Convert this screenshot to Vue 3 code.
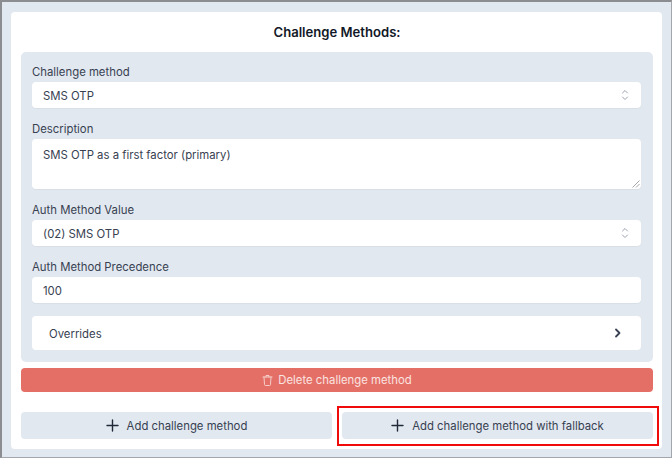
<script setup>
import { ref } from 'vue';

const method = ref('SMS OTP');
const description = ref('SMS OTP as a first factor (primary)');
const authValue = ref('(02) SMS OTP');
const precedence = ref('100');
</script>

<template>
  <div class="page">
    <div class="card">
      <h2 class="title">Challenge Methods:</h2>
      <div class="panel">
        <div class="field">
          <label>Challenge method</label>
          <div class="select">
            <span>{{ method }}</span>
            <svg class="updown" width="8" height="12" viewBox="0 0 8 12" fill="none" stroke="#9ca3af" stroke-width="1" stroke-linecap="round" stroke-linejoin="round">
              <path d="M1.5 4 4 1.5 6.5 4" />
              <path d="M1.5 8 4 10.5 6.5 8" />
            </svg>
          </div>
        </div>
        <div class="field">
          <label>Description</label>
          <div class="textarea">
            {{ description }}
            <svg class="grip" width="8" height="8" viewBox="0 0 8 8" fill="none" stroke="#8b8f96" stroke-width="0.8">
              <path d="M0.5 7.5 7.5 0.5" />
              <path d="M4 7.5 7.5 4" />
            </svg>
          </div>
        </div>
        <div class="field">
          <label>Auth Method Value</label>
          <div class="select">
            <span>{{ authValue }}</span>
            <svg class="updown" width="8" height="12" viewBox="0 0 8 12" fill="none" stroke="#9ca3af" stroke-width="1" stroke-linecap="round" stroke-linejoin="round">
              <path d="M1.5 4 4 1.5 6.5 4" />
              <path d="M1.5 8 4 10.5 6.5 8" />
            </svg>
          </div>
        </div>
        <div class="field">
          <label>Auth Method Precedence</label>
          <div class="select"><span>{{ precedence }}</span></div>
        </div>
        <div class="overrides">
          <span>Overrides</span>
          <svg width="8" height="10" viewBox="0 0 8 10" fill="none" stroke="#374151" stroke-width="1.8" stroke-linecap="round" stroke-linejoin="round">
            <path d="M3 1.5 6.5 5 3 8.5" />
          </svg>
        </div>
      </div>
      <button class="delete" type="button">
        <svg width="11" height="12" viewBox="0 0 11 12" fill="none" stroke="#f6cfca" stroke-width="1" stroke-linecap="round" stroke-linejoin="round">
          <path d="M1 3h9" />
          <path d="M4 3V1.5h3V3" />
          <path d="M2 3l.5 7.5a1 1 0 0 0 1 1h4a1 1 0 0 0 1-1L9 3" />
        </svg>
        Delete challenge method
      </button>
      <div class="actions">
        <button class="add" type="button">
          <svg width="13" height="13" viewBox="0 0 13 13" fill="none" stroke="#1f2937" stroke-width="1.4" stroke-linecap="round">
            <path d="M6.5 1v11M1 6.5h11" />
          </svg>
          Add challenge method
        </button>
        <button class="add highlighted" type="button">
          <svg width="13" height="13" viewBox="0 0 13 13" fill="none" stroke="#1f2937" stroke-width="1.4" stroke-linecap="round">
            <path d="M6.5 1v11M1 6.5h11" />
          </svg>
          Add challenge method with fallback
        </button>
      </div>
    </div>
  </div>
</template>

<style>
html, body { margin: 0; background: #e2e8f0; }
</style>

<style scoped>
.page {
  width: 672px;
  height: 458px;
  box-sizing: border-box;
  background: #e2e8f0;
  border-top: 2px solid #8b8d90;
  border-left: 2px solid #8b8d90;
  border-right: 1px solid #a3a6aa;
  border-bottom: 1px solid #a3a6aa;
  padding: 10px 9px 8px 9px;
  font-family: Inter, "Liberation Sans", sans-serif;
  font-size: 11.35px;
  color: #374151;
}
.card {
  height: 437px;
  box-sizing: border-box;
  background: #fff;
  border-radius: 4px;
  padding: 0 9px 0 10px;
}
.title {
  margin: 0;
  height: 40px;
  line-height: 40px;
  text-align: center;
  font-size: 13.1px;
  font-weight: 600;
  color: #111827;
}
.panel {
  background: #e2e8f0;
  border-radius: 5px;
  padding: 11px 12px 12px 11px;
  height: 310px;
  box-sizing: border-box;
  display: flex;
  flex-direction: column;
}
.field { margin-bottom: 12px; }
label {
  display: block;
  height: 19px;
  line-height: 18px;
  color: #374151;
}
.select {
  height: 26px;
  box-sizing: border-box;
  background: #fff;
  border-radius: 4px;
  padding: 0 11px;
  display: flex;
  align-items: center;
  justify-content: space-between;
  box-shadow: 0 1px 1px rgba(0, 0, 0, 0.04);
}
.select span, .overrides span { padding-top: 1px; }
.updown { margin-right: 1px; }
.textarea {
  position: relative;
  height: 50px;
  box-sizing: border-box;
  background: #fff;
  border-radius: 4px;
  padding: 8px 11px;
  line-height: 16px;
  box-shadow: 0 1px 1px rgba(0, 0, 0, 0.04);
}
.grip { position: absolute; right: 1px; bottom: 1px; }
.overrides {
  height: 34px;
  box-sizing: border-box;
  background: #fff;
  border-radius: 4px;
  padding: 0 20px 0 17px;
  margin-top: 1px;
  display: flex;
  align-items: center;
  justify-content: space-between;
}
button {
  font: inherit;
  border: none;
  cursor: pointer;
  display: flex;
  align-items: center;
  justify-content: center;
}
.delete {
  width: 100%;
  height: 24px;
  margin-top: 6px;
  gap: 5px;
  background: #e36f66;
  color: #fbe3e0;
  border-radius: 4px;
}
.actions {
  display: grid;
  grid-template-columns: 1fr 1fr;
  gap: 10px;
  margin-top: 20px;
}
.add {
  position: relative;
  height: 27px;
  gap: 8px;
  background: #e2e8f0;
  color: #374151;
  border-radius: 4px;
}
.highlighted::after {
  content: "";
  position: absolute;
  top: -6px;
  left: -5px;
  right: -6px;
  bottom: -7px;
  border: 2px solid #f00a0a;
}
</style>
